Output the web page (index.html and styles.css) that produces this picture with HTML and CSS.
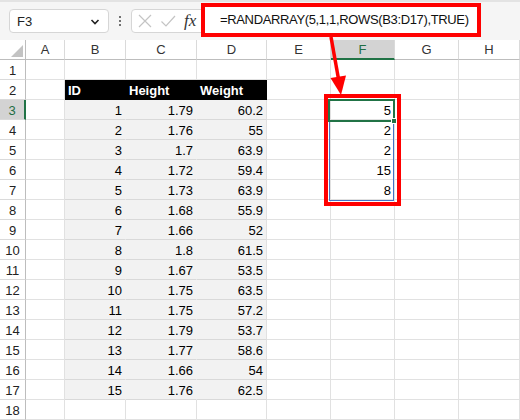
FILE: index.html
```html
<!DOCTYPE html>
<html>
<head>
<meta charset="utf-8">
<link rel="stylesheet" href="styles.css">
</head>
<body>
<div class="page">
  <div class="toolbar">
    <div class="namebox"><span>F3</span>
      <svg class="chev" width="10" height="8" viewBox="0 0 10 8"><path d="M1.5 2 L5 5.5 L8.5 2" fill="none" stroke="#222" stroke-width="1.6"/></svg>
    </div>
    <div class="dots"><i></i><i></i><i></i></div>
    <div class="fnbox">
      <svg class="ic" width="16" height="16" viewBox="0 0 16 16"><path d="M2 2 L14 14 M14 2 L2 14" stroke="#c4c4c4" stroke-width="1.2" fill="none"/></svg>
      <svg class="ic" width="16" height="16" viewBox="0 0 16 16"><path d="M1.5 8.5 L6 13 L15 3" stroke="#c4c4c4" stroke-width="1.2" fill="none"/></svg>
      <span class="fx">fx</span>
    </div>
    <div class="formula">=RANDARRAY(5,1,1,ROWS(B3:D17),TRUE)</div>
  </div>
  <div class="sheet">
    <div class="ch corner"><svg width="12" height="12" viewBox="0 0 12 12"><path d="M12 0 L12 12 L0 12 Z" fill="#c3c3c3"/></svg></div>
    <div class="ch">A</div><div class="ch">B</div><div class="ch">C</div><div class="ch">D</div><div class="ch">E</div><div class="ch selh">F</div><div class="ch">G</div><div class="ch">H</div>

    <div class="rh">1</div><div class="c"></div><div class="c"></div><div class="c"></div><div class="c"></div><div class="c"></div><div class="c"></div><div class="c"></div><div class="c"></div>
    <div class="rh">2</div><div class="c"></div><div class="c k">ID</div><div class="c k">Height</div><div class="c k">Weight</div><div class="c"></div><div class="c"></div><div class="c"></div><div class="c"></div>
    <div class="rh selr">3</div><div class="c"></div><div class="c d">1</div><div class="c d">1.79</div><div class="c d e">60.2</div><div class="c"></div><div class="c r">5</div><div class="c"></div><div class="c"></div>
    <div class="rh">4</div><div class="c"></div><div class="c d">2</div><div class="c d">1.76</div><div class="c d e">55</div><div class="c"></div><div class="c r">2</div><div class="c"></div><div class="c"></div>
    <div class="rh">5</div><div class="c"></div><div class="c d">3</div><div class="c d">1.7</div><div class="c d e">63.9</div><div class="c"></div><div class="c r">2</div><div class="c"></div><div class="c"></div>
    <div class="rh">6</div><div class="c"></div><div class="c d">4</div><div class="c d">1.72</div><div class="c d e">59.4</div><div class="c"></div><div class="c r">15</div><div class="c"></div><div class="c"></div>
    <div class="rh">7</div><div class="c"></div><div class="c d">5</div><div class="c d">1.73</div><div class="c d e">63.9</div><div class="c"></div><div class="c r">8</div><div class="c"></div><div class="c"></div>
    <div class="rh">8</div><div class="c"></div><div class="c d">6</div><div class="c d">1.68</div><div class="c d e">55.9</div><div class="c"></div><div class="c"></div><div class="c"></div><div class="c"></div>
    <div class="rh">9</div><div class="c"></div><div class="c d">7</div><div class="c d">1.66</div><div class="c d e">52</div><div class="c"></div><div class="c"></div><div class="c"></div><div class="c"></div>
    <div class="rh">10</div><div class="c"></div><div class="c d">8</div><div class="c d">1.8</div><div class="c d e">61.5</div><div class="c"></div><div class="c"></div><div class="c"></div><div class="c"></div>
    <div class="rh">11</div><div class="c"></div><div class="c d">9</div><div class="c d">1.67</div><div class="c d e">53.5</div><div class="c"></div><div class="c"></div><div class="c"></div><div class="c"></div>
    <div class="rh">12</div><div class="c"></div><div class="c d">10</div><div class="c d">1.75</div><div class="c d e">63.5</div><div class="c"></div><div class="c"></div><div class="c"></div><div class="c"></div>
    <div class="rh">13</div><div class="c"></div><div class="c d">11</div><div class="c d">1.75</div><div class="c d e">57.2</div><div class="c"></div><div class="c"></div><div class="c"></div><div class="c"></div>
    <div class="rh">14</div><div class="c"></div><div class="c d">12</div><div class="c d">1.79</div><div class="c d e">53.7</div><div class="c"></div><div class="c"></div><div class="c"></div><div class="c"></div>
    <div class="rh">15</div><div class="c"></div><div class="c d">13</div><div class="c d">1.77</div><div class="c d e">58.6</div><div class="c"></div><div class="c"></div><div class="c"></div><div class="c"></div>
    <div class="rh">16</div><div class="c"></div><div class="c d">14</div><div class="c d">1.66</div><div class="c d e">54</div><div class="c"></div><div class="c"></div><div class="c"></div><div class="c"></div>
    <div class="rh">17</div><div class="c"></div><div class="c d">15</div><div class="c d">1.76</div><div class="c d e">62.5</div><div class="c"></div><div class="c"></div><div class="c"></div><div class="c"></div>
    <div class="rh">18</div><div class="c"></div><div class="c"></div><div class="c"></div><div class="c"></div><div class="c"></div><div class="c"></div><div class="c"></div><div class="c"></div>
  </div>

  <div class="spill"></div>
  <div class="active"></div>
  <div class="handle"></div>
  <div class="redbox"></div>
  <svg class="arrow" width="520" height="120" viewBox="0 0 520 120">
    <line x1="331" y1="37" x2="338.5" y2="79" stroke="#ff0000" stroke-width="3.5"/>
    <polygon points="341,95 330.5,78 346,75.5" fill="#ff0000"/>
  </svg>
</div>
</body>
</html>
```
FILE: styles.css
```css
* { box-sizing: border-box; }
html, body { margin: 0; padding: 0; background: #fff; }
body { font-family: "Liberation Sans", Arial, sans-serif; color: #000; }
.page { position: relative; width: 520px; height: 420px; overflow: hidden; }

.toolbar {
  height: 40px;
  background: #f5f5f5;
  border-top: 2px solid #e3e3e3;
  display: flex;
  align-items: center;
  padding-left: 9px;
}
.namebox {
  width: 100px; height: 24px;
  background: #fff;
  border: 1px solid #d6d6d6;
  border-radius: 4px;
  display: flex; align-items: center; justify-content: space-between;
  padding: 0 8px 0 7px;
  font-size: 13px; color: #222;
}
.chev { margin-top: 1px; }
.dots {
  width: 22px; display: flex; flex-direction: column; align-items: center; gap: 2px;
}
.dots i { display: block; width: 2px; height: 2px; background: #444; border-radius: 1px; }
.fnbox {
  width: 78px; height: 24px;
  background: #fff;
  border: 1px solid #d6d6d6;
  border-radius: 4px 0 0 4px;
  display: flex; align-items: center;
  padding-left: 5px; gap: 7px;
  margin-right: -8px;
}
.fx {
  font-family: "Liberation Serif", "Times New Roman", serif;
  font-style: italic; font-size: 17px; color: #333; margin-left: 1px;
}
.formula {
  position: relative;
  width: 280px; height: 34px;
  margin-top: -2px;
  background: #fff;
  border: 4px solid #ff0000;
  font-size: 13px; letter-spacing: -0.35px; color: #111;
  line-height: 26px;
  padding-left: 15px;
  white-space: nowrap;
}

.sheet {
  display: grid;
  grid-template-columns: 26px 39px 61px 71px 70px 64px 64px 64px 1fr;
  grid-auto-rows: 20px;
  font-size: 13px;
}
.ch {
  background: #fff;
  border-right: 1px solid #dadada;
  border-bottom: 1px solid #bdbdbd;
  text-align: center;
  line-height: 20px;
  color: #333;
}
.corner { position: relative; border-right-color: #bdbdbd; }
.corner svg { position: absolute; right: 2px; bottom: 2px; }
.selh { background: #d3d3d3; color: #1f6e43; border-bottom: 2px solid #217346; }
.rh {
  background: #fff;
  border-right: 1px solid #bdbdbd;
  border-bottom: 1px solid #dadada;
  text-align: center;
  line-height: 22px;
  color: #222;
}
.selr { background: #d3d3d3; color: #1f6e43; border-right: 2px solid #217346; }
.c {
  border-right: 1px solid #e1e1e1;
  border-bottom: 1px solid #e1e1e1;
  line-height: 22px;
  padding: 0 3px;
  white-space: nowrap;
  overflow: hidden;
}
.r { text-align: right; }
.d { background: #f2f2f2; border-right-color: #f2f2f2; border-bottom-color: #d9d9d9; text-align: right; }
.d.e { border-right-color: #e1e1e1; }
.k { background: #000; color: #fff; font-weight: bold; border-right-color: #000; border-bottom-color: #000; }

.spill { position: absolute; left: 329px; top: 100px; width: 65px; height: 101px; border: 1px solid #4472c4; }
.active { position: absolute; left: 328px; top: 99px; width: 67px; height: 23px; border: 2px solid #217346; }
.handle { position: absolute; left: 391px; top: 118px; width: 6px; height: 6px; background: #217346; border: 1px solid #fff; }
.redbox { position: absolute; left: 324px; top: 94px; width: 77px; height: 112px; border: 4px solid #ff0000; }
.arrow { position: absolute; left: 0; top: 0; }
```
